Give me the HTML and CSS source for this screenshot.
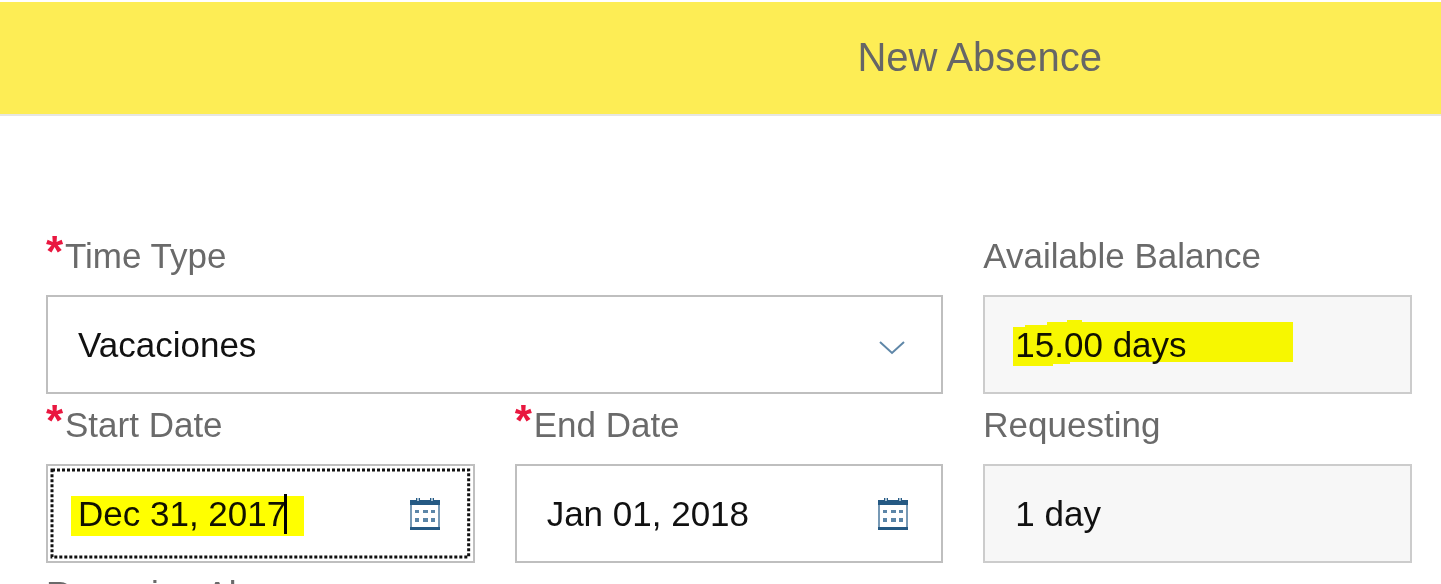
FILE: index.html
```html
<!DOCTYPE html>
<html lang="en">
<head>
<meta charset="utf-8">
<title>New Absence</title>
<link rel="stylesheet" href="styles.css">
</head>
<body>
<header class="header">
  <h1 class="title">New Absence</h1>
</header>
<main>
  <form class="form">
    <div class="field field-wide">
      <label class="label required" for="time-type">Time Type</label>
      <div class="box">
        <select class="control" id="time-type" required>
          <option>Vacaciones</option>
        </select>
        <svg class="chevron" viewBox="0 0 26 14" aria-hidden="true"><path d="M1 1 13 12 25 1"/></svg>
      </div>
    </div>
    <div class="field">
      <label class="label" for="balance">Available Balance</label>
      <div class="box box-readonly">
        <input class="control" id="balance" type="text" value="15.00 days" readonly>
        <svg class="marker marker-balance" viewBox="0 0 280 48" aria-hidden="true"><path d="M0 8H12V6H34V3H54V1H69V3H280V43H57V45H40V47H0Z"/></svg>
      </div>
    </div>
    <div class="field">
      <label class="label required" for="start-date">Start Date</label>
      <div class="box">
        <svg class="focus-ring" aria-hidden="true"><rect width="100%" height="100%"/></svg>
        <input class="control" id="start-date" type="text" value="Dec 31, 2017" required>
        <span class="marker marker-start"></span>
        <span class="caret"></span>
        <button class="picker" type="button" aria-label="Choose start date">
          <svg class="calendar" viewBox="0 0 30 34" aria-hidden="true"><path class="frame" d="M1 3V32M29 3V32"/><path d="M0 3H6V1H10V3H20V1H24V3H30V8H0ZM0 30H30V33H0Z"/><path class="days" d="M5 13H9V16H5ZM13 13H18V16H13ZM21 13H25V16H21ZM5 21H9V25H5ZM13 21H18V25H13ZM21 21H25V25H21Z"/><path class="rings" d="M7 1H9V4H7ZM21 1H23V4H21Z"/></svg>
        </button>
      </div>
    </div>
    <div class="field">
      <label class="label required" for="end-date">End Date</label>
      <div class="box">
        <input class="control" id="end-date" type="text" value="Jan 01, 2018" required>
        <button class="picker" type="button" aria-label="Choose end date">
          <svg class="calendar" viewBox="0 0 30 34" aria-hidden="true"><path class="frame" d="M1 3V32M29 3V32"/><path d="M0 3H6V1H10V3H20V1H24V3H30V8H0ZM0 30H30V33H0Z"/><path class="days" d="M5 13H9V16H5ZM13 13H18V16H13ZM21 13H25V16H21ZM5 21H9V25H5ZM13 21H18V25H13ZM21 21H25V25H21Z"/><path class="rings" d="M7 1H9V4H7ZM21 1H23V4H21Z"/></svg>
        </button>
      </div>
    </div>
    <div class="field">
      <label class="label" for="requesting">Requesting</label>
      <div class="box box-readonly">
        <input class="control" id="requesting" type="text" value="1 day" readonly>
      </div>
    </div>
    <div class="field">
      <span class="label">Recurring Absence</span>
    </div>
  </form>
</main>
</body>
</html>
```
FILE: styles.css
```css
* {
  box-sizing: border-box;
}

body {
  height: 100vh;
  margin: 0;
  padding-top: 2px;
  overflow: hidden;
  background: #fff;
  color: #111;
  font-family: "Liberation Sans", Arial, sans-serif;
  font-size: 35px;
}

.header {
  padding: 31px 0 33px 59.5%;
  background: #fded55;
  border-bottom: 2px solid #e6e6e2;
}

.title {
  margin: 0;
  color: #666;
  font-size: 40px;
  font-weight: 400;
  line-height: 48px;
}

.form {
  display: grid;
  grid-template-columns: repeat(3, minmax(0, 1fr));
  column-gap: 40px;
  padding: 109px 29px 0 46px;
}

.field-wide {
  grid-column: span 2;
}

.label {
  display: flex;
  height: 70px;
  padding-top: 9px;
  color: #6a6a6a;
  line-height: 44px;
  white-space: nowrap;
}

.required::before {
  content: "*";
  width: 19px;
  color: #e9173f;
  font-size: 44px;
  font-weight: 700;
  line-height: 36px;
}

.box {
  position: relative;
  display: flex;
  align-items: center;
  height: 99px;
  padding-right: 33px;
  border: 2px solid #bfbfbf;
}

.box-readonly {
  background: #f7f7f7;
  border-color: #ccc;
}

.control {
  flex: 1;
  min-width: 0;
  height: 100%;
  padding: 0 0 0 30px;
  appearance: none;
  background: none;
  border: 0;
  outline: 0;
  color: inherit;
  font: inherit;
}

.chevron {
  width: 26px;
  height: 14px;
  margin-top: 6px;
  margin-right: 3px;
  fill: none;
  stroke: #5f87a8;
  stroke-width: 2;
}

.picker {
  display: flex;
  padding: 0;
  background: none;
  border: 0;
}

.calendar {
  width: 30px;
  height: 34px;
  fill: #255983;
}

.calendar .frame {
  fill: none;
  stroke: #7799b5;
  stroke-width: 2;
}

.calendar .days {
  fill: #5c86a8;
}

.calendar .rings {
  fill: #a9c0d2;
}

.focus-ring {
  position: absolute;
  inset: 4px;
  width: calc(100% - 8px);
  height: calc(100% - 8px);
  overflow: visible;
  pointer-events: none;
}

.focus-ring rect {
  fill: none;
  stroke: #111;
  stroke-width: 3;
  stroke-dasharray: 3 2;
}

.marker {
  position: absolute;
  mix-blend-mode: multiply;
  pointer-events: none;
}

.marker-balance {
  top: 22px;
  left: 28px;
  width: 280px;
  height: 48px;
  fill: #ff0;
}

.marker-start {
  top: 30px;
  left: 23px;
  width: 233px;
  height: 40px;
  background: #ff0;
}

.caret {
  position: absolute;
  top: 28px;
  left: 236px;
  width: 3px;
  height: 40px;
  background: #000;
}
```
